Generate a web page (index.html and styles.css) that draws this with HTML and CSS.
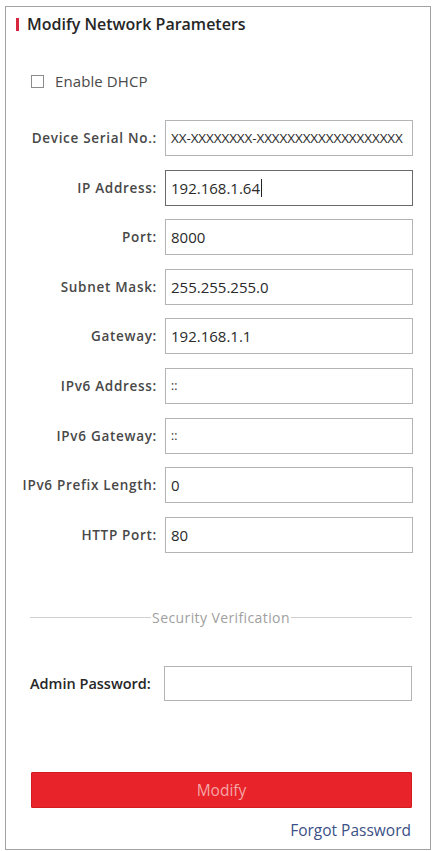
FILE: index.html
```html
<!DOCTYPE html>
<html lang="en">
<head>
<meta charset="utf-8">
<title>Modify Network Parameters</title>
<link rel="stylesheet" href="styles.css">
</head>
<body>
<div class="frame">
  <div class="title"><span class="title-bar"></span><span class="title-text">Modify Network Parameters</span></div>

  <label class="dhcp"><span class="checkbox"></span><span class="dhcp-text">Enable DHCP</span></label>

  <div class="form">
    <div class="label">Device Serial No.:</div>
    <div class="field"><span class="value serial">XX-XXXXXXXX-XXXXXXXXXXXXXXXXXXX</span></div>

    <div class="label">IP Address:</div>
    <div class="field focused"><span class="value">192.168.1.64</span><span class="caret"></span></div>

    <div class="label">Port:</div>
    <div class="field"><span class="value">8000</span></div>

    <div class="label">Subnet Mask:</div>
    <div class="field"><span class="value">255.255.255.0</span></div>

    <div class="label">Gateway:</div>
    <div class="field"><span class="value">192.168.1.1</span></div>

    <div class="label">IPv6 Address:</div>
    <div class="field"><span class="value small">::</span></div>

    <div class="label">IPv6 Gateway:</div>
    <div class="field"><span class="value small">::</span></div>

    <div class="label">IPv6 Prefix Length:</div>
    <div class="field"><span class="value">0</span></div>

    <div class="label">HTTP Port:</div>
    <div class="field"><span class="value">80</span></div>
  </div>

  <div class="divider"><span class="divider-text">Security Verification</span></div>

  <div class="admin">
    <div class="admin-label">Admin Password:</div>
    <div class="field admin-field"></div>
  </div>

  <div class="button">Modify</div>

  <div class="forgot"><span class="forgot-link">Forgot Password</span></div>
</div>
</body>
</html>
```
FILE: styles.css
```css
html, body {
  margin: 0;
  padding: 0;
  background: #ffffff;
}

body {
  font-family: "Open Sans", "Noto Sans", sans-serif;
  color: #333333;
}

.frame {
  margin: 6px 6px 0 5px;
  width: 424px;
  height: 842px;
  border: 1px solid #a3a3a3;
  display: flex;
  flex-direction: column;
}

.title {
  margin-top: 9px;
  padding-left: 10px;
  height: 17px;
  display: flex;
  align-items: center;
  gap: 8px;
}

.title-bar {
  width: 3px;
  height: 13px;
  background: #d7263d;
}

.title-text {
  font-size: 16px;
  font-weight: 600;
  color: #262626;
  line-height: 17px;
}

.dhcp {
  margin-top: 41px;
  padding-left: 25px;
  height: 14px;
  display: flex;
  align-items: center;
  gap: 11px;
}

.checkbox {
  box-sizing: border-box;
  width: 13px;
  height: 13px;
  border: 1px solid #8c8c8c;
  background: #fff;
}

.dhcp-text {
  font-size: 15px;
  color: #4a4a4a;
  line-height: 14px;
  letter-spacing: 0.1px;
}

.form {
  margin-top: 32px;
  display: grid;
  grid-template-columns: 151px 248px;
  grid-auto-rows: 36px;
  column-gap: 8px;
  row-gap: 13.6px;
}

.label {
  display: flex;
  align-items: center;
  justify-content: flex-end;
  font-size: 13.5px;
  font-weight: 600;
  letter-spacing: 0.7px;
  color: #484848;
  white-space: nowrap;
}

.field {
  box-sizing: border-box;
  border: 1px solid #b4b4b4;
  background: #fff;
  display: flex;
  align-items: center;
  padding-left: 5px;
  overflow: hidden;
  white-space: nowrap;
}

.field.focused {
  border-color: #6a6a6a;
}

.value {
  font-size: 15px;
  color: #2a2a2a;
}

.value.serial {
  font-size: 13.5px;
  letter-spacing: -0.1px;
}

.value.small {
  font-size: 12px;
}

.caret {
  width: 1px;
  height: 18px;
  background: #222;
  margin-left: 1px;
}

.divider {
  margin-top: 56px;
  margin-left: 24px;
  width: 382px;
  height: 18px;
  display: flex;
  align-items: center;
}

.divider::before,
.divider::after {
  content: "";
  flex: 1;
  height: 1px;
  background: #cfcfcf;
}

.divider-text {
  font-size: 14px;
  letter-spacing: 0.4px;
  color: #a0a0a0;
  padding: 0 1px;
}

.admin {
  margin-top: 39px;
  padding-left: 24px;
  display: flex;
  height: 35px;
}

.admin-label {
  width: 134px;
  display: flex;
  align-items: center;
  font-size: 14.5px;
  font-weight: 600;
  color: #262626;
  white-space: nowrap;
}

.admin-field {
  width: 248px;
}

.button {
  margin-top: 71px;
  margin-left: 25px;
  width: 381px;
  height: 36px;
  box-sizing: border-box;
  background: #e8232a;
  border: 1px solid #d21c22;
  border-radius: 1px;
  display: flex;
  align-items: center;
  justify-content: center;
  font-size: 15.5px;
  color: #f5a6a6;
}

.forgot {
  margin-top: 13px;
  width: 405px;
  height: 18px;
  display: flex;
  justify-content: flex-end;
}

.forgot-link {
  font-size: 15.5px;
  color: #3b5187;
  line-height: 18px;
}
```
